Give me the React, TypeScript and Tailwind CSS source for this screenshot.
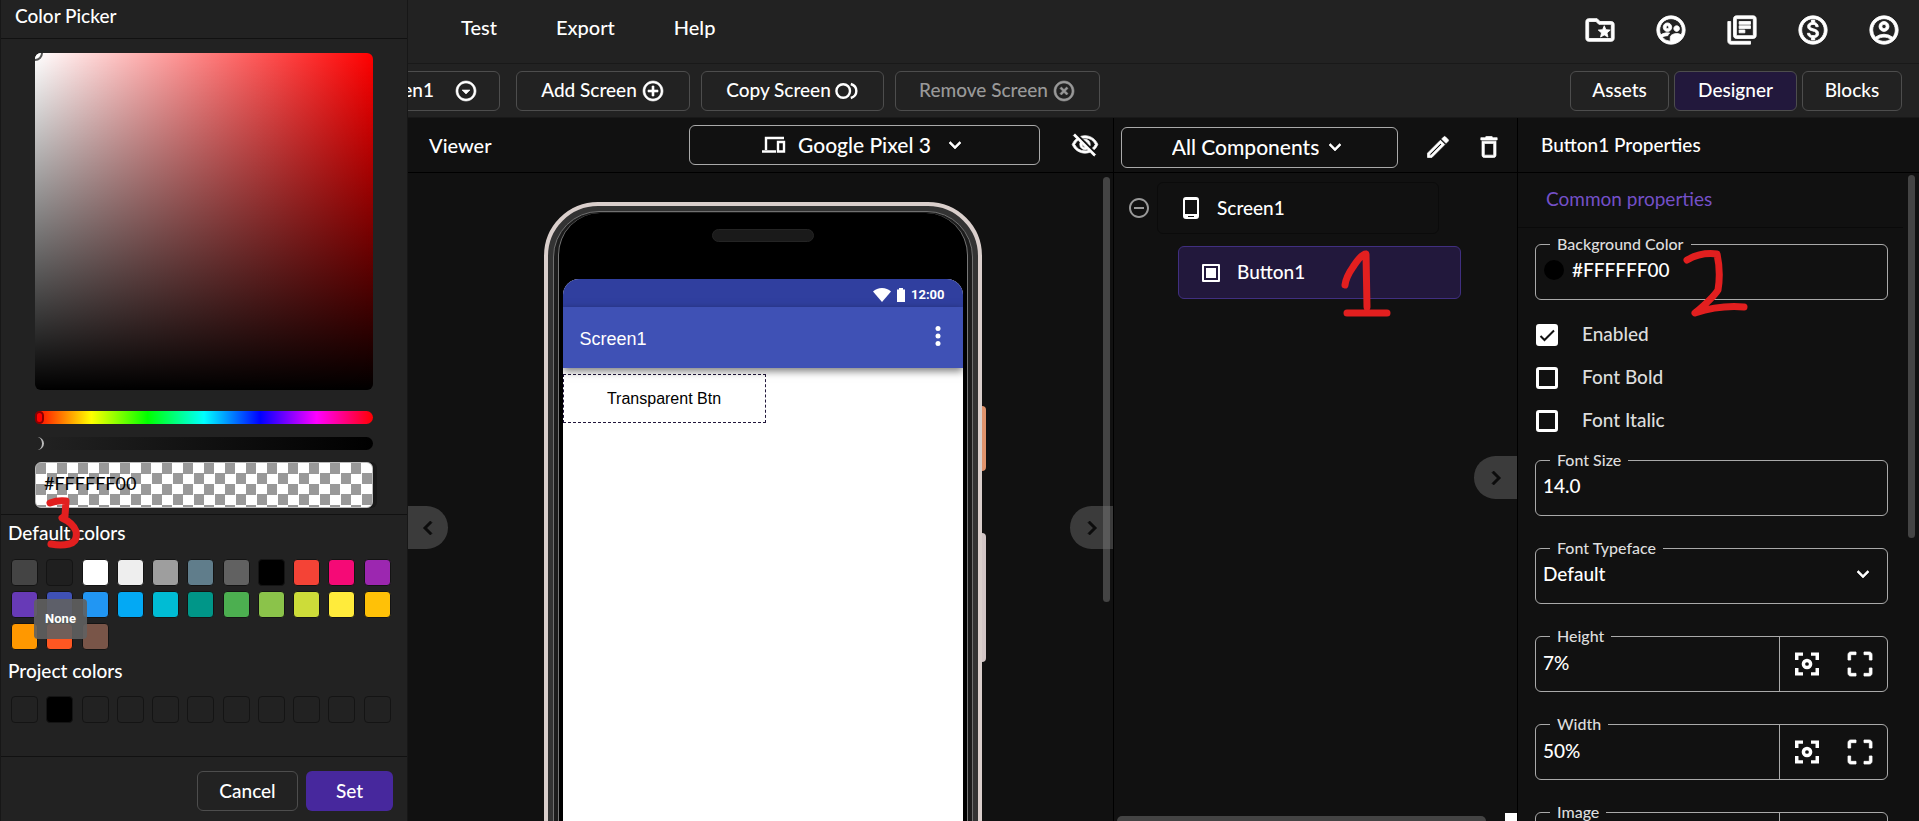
import React, { useState } from "react";
import {
  MdAddCircleOutline, MdCropFree, MdDeleteOutline, MdHighlightOff,
  MdKeyboardArrowDown, MdKeyboardArrowLeft, MdKeyboardArrowRight, MdOutlineAccountCircle,
  MdOutlineArrowDropDownCircle, MdOutlineFolderSpecial, MdOutlineLibraryBooks, MdOutlineModeEdit,
  MdOutlineMonetizationOn, MdOutlineSupervisedUserCircle, MdOutlineVisibilityOff, MdRemoveCircleOutline,
} from "react-icons/md";

const defaultColors = [
  "#444444", "#1f1f1f", "#ffffff", "#eeeeee", "#9e9e9e", "#607d8b", "#616161", "#000000", "#f44336", "#f50a76", "#9c27b0",
  "#673ab7", "#3f51b5", "#2196f3", "#03a9f4", "#00bcd4", "#009688", "#4caf50", "#8bc34a", "#cddc39", "#ffeb3b", "#ffc107",
  "#ff9800", "#ff5722", "#795548",
];
const projectColors = ["", "#000000", "", "", "", "", "", "", "", "", ""];

const accountLinks = [
  { label: "Projects", icon: MdOutlineFolderSpecial },
  { label: "Community", icon: MdOutlineSupervisedUserCircle },
  { label: "Docs", icon: MdOutlineLibraryBooks },
  { label: "Billing", icon: MdOutlineMonetizationOn },
  { label: "Account", icon: MdOutlineAccountCircle },
];

// thickens the stock icons a little
const bold = "stroke-current [stroke-width:0.6]";

function CopyCircles() {
  return (
    <svg viewBox="0 0 24 24" className="h-6 w-6" fill="none" stroke="currentColor" strokeWidth="2.4">
      <circle cx="8.200" cy="12" r="6.800" />
      <path d="M15.800 5c7.400 2.400 7.400 11.600 0 14" />
    </svg>
  );
}

function ToolButton(props: React.ButtonHTMLAttributes<HTMLButtonElement> & { active?: boolean }) {
  const { active, className, ...rest } = props;
  const style = active ? "bg-[#22183c]" : "bg-[#222]";
  return (
    <button
      className={`flex h-10 items-center justify-center gap-1 whitespace-nowrap rounded-md border border-[#4d4d4d] disabled:text-[#999] ${style} ${className ?? ""}`}
      {...rest}
    />
  );
}

function Swatch({ color }: { color: string }) {
  return (
    <button
      aria-label={color || "Empty"}
      className="h-[27px] w-[27px] rounded border border-[#141414]"
      style={{ backgroundColor: color || "transparent" }}
    />
  );
}

function ColorPicker() {
  const [hex, setHex] = useState("#FFFFFF00");
  return (
    <aside className="absolute inset-y-0 left-0 z-20 flex w-[408px] flex-col border-x border-[#171717] bg-[#222]">
      <h2 className="h-[39px] shrink-0 border-b border-[#111] px-[14px] leading-8">Color Picker</h2>
      <div className="flex shrink-0 flex-col border-b border-[#111] px-[34px] pb-[6px] pt-[14px]">
        <div className="relative h-[337px] overflow-hidden rounded-md bg-[linear-gradient(to_top,#000,transparent),linear-gradient(to_right,#fff,#f00)]">
          <span className="absolute -left-2 -top-2 h-4 w-4 rounded-full border-2 border-[#555] bg-white" />
        </div>
        <input
          type="range" aria-label="Hue" min={0} max={360} defaultValue={0}
          className="mt-[21px] h-[13px] w-full appearance-none rounded-full bg-[linear-gradient(to_right,#f00,#ff0,#0f0,#0ff,#00f,#f0f,#f00)] [&::-webkit-slider-thumb]:h-[13px] [&::-webkit-slider-thumb]:w-[9px] [&::-webkit-slider-thumb]:appearance-none [&::-webkit-slider-thumb]:rounded-full [&::-webkit-slider-thumb]:border-2 [&::-webkit-slider-thumb]:border-[#8a0000] [&::-webkit-slider-thumb]:bg-[#f00]"
        />
        <input
          type="range" aria-label="Alpha" min={0} max={255} defaultValue={0}
          className="mt-[13px] h-[13px] w-full appearance-none rounded-full bg-[linear-gradient(to_right,#222,#000)] [&::-webkit-slider-thumb]:h-[13px] [&::-webkit-slider-thumb]:w-[9px] [&::-webkit-slider-thumb]:appearance-none [&::-webkit-slider-thumb]:rounded-r-full [&::-webkit-slider-thumb]:border-r-2 [&::-webkit-slider-thumb]:border-[#bbb]"
        />
        <input
          aria-label="Hex value" value={hex} onChange={(e) => setHex(e.target.value)}
          className="mt-3 h-[46px] w-full rounded-md border border-[#bbb] bg-[repeating-conic-gradient(#fff_0_25%,#999_0_50%)] bg-[length:21px_21px] pb-1 pl-2 text-lg font-normal text-black shadow-[4px_0_0_#191919]"
        />
      </div>
      <h3 className="shrink-0 px-[7px] pt-[2px] leading-8">Default colors</h3>
      <div className="relative mt-[10px] grid shrink-0 grid-cols-11 gap-y-[5px] pl-[10px] pr-2">
        {defaultColors.map((c) => <Swatch key={c} color={c} />)}
        <span role="tooltip" className="absolute left-[33px] top-10 flex h-10 w-[53px] items-center justify-center rounded bg-[#616161e6] font-[Roboto,sans-serif] text-[13px] font-bold">None</span>
      </div>
      <h3 className="mt-[5px] shrink-0 px-[7px] leading-8">Project colors</h3>
      <div className="mt-[9px] grid shrink-0 grid-cols-11 pl-[10px] pr-2">
        {projectColors.map((c, i) => <Swatch key={i} color={c} />)}
      </div>
      <div className="mt-auto flex h-[65px] shrink-0 justify-end gap-2 border-t border-[#111] pr-[14px] pt-[14px]">
        <ToolButton className="w-[101px]">Cancel</ToolButton>
        <button className="h-10 w-[87px] rounded-md bg-[#47289d]">Set</button>
      </div>
    </aside>
  );
}

function Phone() {
  return (
    <div className="relative h-[880px] w-[438px] shrink-0">
      <span className="absolute -right-1 top-[204px] h-[65px] w-[6px] rounded-r-sm bg-[#e0936c]" />
      <span className="absolute -right-1 top-[331px] h-[129px] w-[6px] rounded-r-sm bg-[#d3c6c6]" />
      <div className="relative h-full rounded-[54px] border-4 border-[#dacfcc] bg-[#333] p-[5px]">
        <div className="h-full rounded-[46px] border border-[#707070] bg-[#1c1c1c] px-1 pt-px">
          <div className="flex h-full flex-col rounded-[42px] border-x border-[#777] bg-black px-1">
            <div className="flex h-[66px] shrink-0 justify-center pt-4">
              <span className="h-[13px] w-[102px] rounded-full border border-[#242424] bg-[#1a1a1a]" />
            </div>
            <div className="flex grow flex-col overflow-hidden rounded-t-2xl bg-white font-['Liberation_Sans',Arial,sans-serif]">
              <div className="flex h-7 shrink-0 items-center justify-end gap-1 bg-[#303f9f] pr-[18px] pt-1 font-[Roboto,sans-serif] text-[13px] font-bold">
                <svg viewBox="0 0 18 14" className="h-[14px] w-[18px]" fill="white"><path d="M9 14 0 3.600C2.400 1.300 5.500 0 9 0s6.600 1.300 9 3.600z" /></svg>
                <svg viewBox="0 0 12 16" className="h-4 w-3" fill="white"><path d="M4 1h4v1.500h2V15H2V2.500h2z" /></svg>
                12:00
              </div>
              <div className="z-10 flex h-[61px] shrink-0 items-center justify-between bg-[#3f51b5] pl-[17px] pr-[22px] pt-1 text-[18px] shadow-[0_3px_8px_#0008]">
                Screen1
                <svg viewBox="0 0 6 20" className="mb-2 h-5 w-[6px]" fill="white">
                  <circle cx="3" cy="2.500" r="2.500" /><circle cx="3" cy="10" r="2.500" /><circle cx="3" cy="17.500" r="2.500" />
                </svg>
              </div>
              <button className="mt-[6px] h-[49px] w-[203px] shrink-0 border border-dashed border-[#22183c] text-base font-normal text-black">Transparent Btn</button>
            </div>
          </div>
        </div>
      </div>
    </div>
  );
}

function Handle({ side, className }: { side: "left" | "right"; className: string }) {
  const Icon = side === "left" ? MdKeyboardArrowLeft : MdKeyboardArrowRight;
  const round = side === "left" ? "left-0 w-10 rounded-r-full" : "right-0 w-[43px] rounded-l-full";
  return (
    <button
      aria-label="Collapse panel"
      className={`absolute z-10 flex h-[43px] items-center justify-center bg-[#7777776b] text-[#0c0c0c] ${round} ${className}`}
    >
      <Icon className={`h-7 w-7 ${bold}`} />
    </button>
  );
}

function Field({ id, label, children }: { id: string; label: string; children: React.ReactNode }) {
  return (
    <fieldset className="h-[68px] min-w-0 rounded-md border border-[#aaa] pl-[7px]">
      <legend className="ml-[7px] px-[7px] text-base leading-6 text-[#ddd]"><label htmlFor={id}>{label}</label></legend>
      {children}
    </fieldset>
  );
}

function FocusIcon() {
  return (
    <svg viewBox="0 0 24 24" className="h-8 w-8" fill="none" stroke="currentColor" strokeWidth="2.600">
      <path d="M4.300 9V4.600H9M15 4.600h4.700V9M19.700 15v4.400H15M9 19.400H4.300V15" />
      <circle cx="12" cy="12" r="2.700" />
    </svg>
  );
}

function SizeField({ id, label, value }: { id: string; label: string; value: string }) {
  return (
    <Field id={id} label={label}>
      <div className="-mt-3 flex h-14">
        <input id={id} defaultValue={value} className="h-10 min-w-0 grow self-start bg-transparent pt-3" />
        <div className="flex h-[55px] w-[108px] shrink-0 items-center justify-around border-l border-[#aaa]">
          <button aria-label="Wrap content"><FocusIcon /></button>
          <button aria-label="Fill parent"><MdCropFree className={`h-8 w-8 ${bold}`} /></button>
        </div>
      </div>
    </Field>
  );
}

function Check({ label, on }: { label: string; on?: boolean }) {
  const [checked, setChecked] = useState(!!on);
  return (
    <label className="flex h-[43px] items-center gap-6 pl-px text-[#ddd]">
      <span className="relative h-[22px] w-[22px]">
        <input
          type="checkbox" checked={checked} onChange={(e) => setChecked(e.target.checked)}
          className="block h-[22px] w-[22px] appearance-none rounded-[3px] border-[3px] border-white checked:bg-white"
        />
        {checked && (
          <svg viewBox="0 0 22 22" className="pointer-events-none absolute inset-0" fill="none" stroke="#111" strokeWidth="2">
            <path d="m4.500 12 4 4L18 6.500" />
          </svg>
        )}
      </span>
      {label}
    </label>
  );
}

function Marks() {
  const base = "pointer-events-none absolute z-30";
  return (
    <>
      <svg aria-hidden="true" viewBox="0 0 36 54" className={`${base} left-[46px] top-[496px] h-[54px] w-9`} fill="none" stroke="#e21f1f" strokeWidth="7" strokeLinecap="round" strokeLinejoin="round">
        <path d="M4 7q8-3 16-2l-1 15-3 2q11 5 14 13 2 11-7 13-8 2-18 0" />
      </svg>
      <svg aria-hidden="true" viewBox="0 0 52 70" className={`${base} left-[1340px] top-[248px] h-[70px] w-[52px]`} fill="none" stroke="#e21f1f" strokeWidth="7" strokeLinecap="round" strokeLinejoin="round">
        <path d="M5 37q1-8 8-18Q22 5 26 6l1 53M7 65h40" />
      </svg>
      <svg aria-hidden="true" viewBox="0 0 66 70" className={`${base} right-[170px] top-[248px] h-[70px] w-[66px]`} fill="none" stroke="#e21f1f" strokeWidth="7" strokeLinecap="round" strokeLinejoin="round">
        <path d="M4 12Q18 4 34 6q4 18 1 36Q30 50 12 65q24-8 49-6" />
      </svg>
    </>
  );
}

export default function App() {
  return (
    <div className="relative flex h-screen flex-col overflow-hidden bg-[#111] font-[Lato,sans-serif] text-[19px] font-medium text-white [&_path[fill=none]]:stroke-none">
      <header className="flex h-16 shrink-0 items-center justify-between border-b border-[#191919] bg-[#222] pl-[461px] pr-[18px]">
        <nav className="flex gap-[59px] pb-[10px] text-xl">
          <a href="#test">Test</a>
          <a href="#export">Export</a>
          <a href="#help">Help</a>
        </nav>
        <div className="flex gap-[37px] pb-1">
          {accountLinks.map(({ label, icon: Icon }) => (
            <a key={label} href="#" aria-label={label}><Icon className={`h-[34px] w-[34px] ${bold}`} /></a>
          ))}
        </div>
      </header>
      <div className="flex h-[54px] shrink-0 items-center justify-between border-b border-[#191919] bg-[#222] pl-[319px] pr-[17px]">
        <div className="flex gap-[11px]">
          <ToolButton className="mr-[5px] w-[181px] justify-end gap-5 pr-[21px]">Screen1<MdOutlineArrowDropDownCircle className={`h-6 w-6 ${bold}`} /></ToolButton>
          <ToolButton className="w-[174px]">Add Screen<MdAddCircleOutline className={`h-6 w-6 ${bold}`} /></ToolButton>
          <ToolButton className="w-[183px]">Copy Screen<CopyCircles /></ToolButton>
          <ToolButton className="w-[205px]" disabled>Remove Screen<MdHighlightOff className={`h-6 w-6 ${bold}`} /></ToolButton>
        </div>
        <div className="flex gap-[5px]">
          <ToolButton className="w-[99px]">Assets</ToolButton>
          <ToolButton className="w-[123px]" active>Designer</ToolButton>
          <ToolButton className="w-[100px]">Blocks</ToolButton>
        </div>
      </div>

      <div className="flex min-h-0 grow pl-[408px]">
        <main className="relative flex min-w-0 grow flex-col border-r border-black">
          <div className="flex h-[55px] shrink-0 items-center justify-between border-b border-black pl-[21px] pr-[14px]">
            <h2 className="text-xl">Viewer</h2>
            <div className="flex items-center gap-[31px]">
              <div className="flex h-10 w-[351px] items-center justify-center gap-3 rounded-md border border-[#aaa]">
                <svg viewBox="0 0 24 18" className="h-[18px] w-6" fill="none" stroke="currentColor" strokeWidth="2.400">
                  <path d="M22 2H4v12M0 15.500h14M16 6h6v9.500h-6z" />
                </svg>
                <select aria-label="Device" className="field-sizing-content appearance-none bg-transparent text-[21px]"><option>Google Pixel 3</option></select>
                <MdKeyboardArrowDown className={`h-6 w-6 ${bold}`} />
              </div>
              <button aria-label="Toggle hidden components"><MdOutlineVisibilityOff className={`h-7 w-7 ${bold}`} /></button>
            </div>
          </div>
          <div className="flex min-h-0 grow justify-center overflow-hidden pl-1 pt-[29px]">
            <Phone />
          </div>
          <span className="absolute right-[3px] top-[59px] h-[425px] w-[7px] rounded-full bg-[#444]" />
          <Handle side="left" className="top-[388px]" />
          <Handle side="right" className="top-[388px]" />
        </main>

        <section className="relative flex w-[404px] shrink-0 flex-col border-r border-black">
          <div className="flex h-[55px] shrink-0 items-center border-b border-black pl-[7px] pt-1">
            <div className="flex h-[41px] w-[277px] items-center justify-center gap-1 rounded-md border border-[#aaa]">
              <select aria-label="Component filter" className="field-sizing-content appearance-none bg-transparent text-[21px]"><option>All Components</option></select>
              <MdKeyboardArrowDown className={`h-6 w-6 ${bold}`} />
            </div>
            <button aria-label="Rename" className="ml-[26px]"><MdOutlineModeEdit className={`h-7 w-7 ${bold}`} /></button>
            <button aria-label="Delete" className="ml-[23px]"><MdDeleteOutline className={`h-7 w-7 ${bold}`} /></button>
          </div>
          <ul className="pl-[13px] pt-[9px]">
            <li className="flex items-center gap-[6px]">
              <button aria-label="Collapse Screen1" className="text-[#999]"><MdRemoveCircleOutline className="h-6 w-6" /></button>
              <button className="flex h-[52px] w-[282px] items-center gap-[18px] rounded-md border border-[#0b0b0b] pl-[25px]">
                <svg viewBox="0 0 16 22" className="h-[22px] w-4" fill="currentColor">
                  <path fillRule="evenodd" d="M3 0h10a3 3 0 0 1 3 3v16a3 3 0 0 1-3 3H3a3 3 0 0 1-3-3V3a3 3 0 0 1 3-3zM2 3v14h12V3zM5 19v1h6v-1z" />
                </svg>
                Screen1
              </button>
            </li>
            <li className="pl-[51px] pt-3">
              <button className="flex h-[53px] w-[283px] items-center gap-[17px] rounded-md border border-[#402f80] bg-[#22183c] pl-[23px]">
                <svg viewBox="0 0 18 18" className="h-[18px] w-[18px]" fill="currentColor">
                  <path fillRule="evenodd" d="M1 0h16a1 1 0 0 1 1 1v16a1 1 0 0 1-1 1H1a1 1 0 0 1-1-1V1a1 1 0 0 1 1-1zM2 2v14h14V2z" />
                  <path d="M4 4h10v10H4z" />
                </svg>
                Button1
              </button>
            </li>
          </ul>
          <div className="mt-auto flex items-end justify-between pl-[3px]">
            <span className="h-[5px] w-[369px] rounded-t-full bg-[#444]" />
            <span className="h-2 w-3 bg-white" />
          </div>
          <Handle side="right" className="top-[338px]" />
        </section>

        <section className="relative flex w-[401px] shrink-0 flex-col">
          <h2 className="flex h-[55px] shrink-0 items-center border-b border-black pl-[23px]">Button1 Properties</h2>
          <div className="min-h-0 grow overflow-hidden">
            <h3 className="mr-4 flex h-[55px] items-center border-b border-[#0a0a0a] pb-[2px] pl-[28px] font-normal text-[#7450c8]">Common properties</h3>
            <div className="flex flex-col pl-[17px] pr-[31px] pt-1">
              <Field id="bg" label="Background Color">
                <div className="flex items-center gap-2">
                  <span className="ml-[1px] h-5 w-5 rounded-full bg-black" />
                  <input id="bg" defaultValue="#FFFFFF00" className="h-7 min-w-0 grow bg-transparent" />
                </div>
              </Field>
              <div className="mb-[6px] mt-[13px]">
                <Check label="Enabled" on />
                <Check label="Font Bold" />
                <Check label="Font Italic" />
              </div>
              <div className="flex flex-col gap-5">
                <Field id="size" label="Font Size">
                  <input id="size" defaultValue="14.0" className="h-7 w-full bg-transparent" />
                </Field>
                <Field id="face" label="Font Typeface">
                  <div className="flex items-center pr-3">
                    <select id="face" className="h-7 grow appearance-none bg-transparent"><option>Default</option></select>
                    <MdKeyboardArrowDown className={`h-6 w-6 ${bold}`} />
                  </div>
                </Field>
                <SizeField id="height" label="Height" value="7%" />
                <SizeField id="width" label="Width" value="50%" />
                <SizeField id="image" label="Image" value="" />
              </div>
            </div>
          </div>
          <span className="absolute right-1 top-[57px] h-[363px] w-[7px] rounded-full bg-[#444]" />
        </section>
      </div>
      <ColorPicker />
      <Marks />
    </div>
  );
}
